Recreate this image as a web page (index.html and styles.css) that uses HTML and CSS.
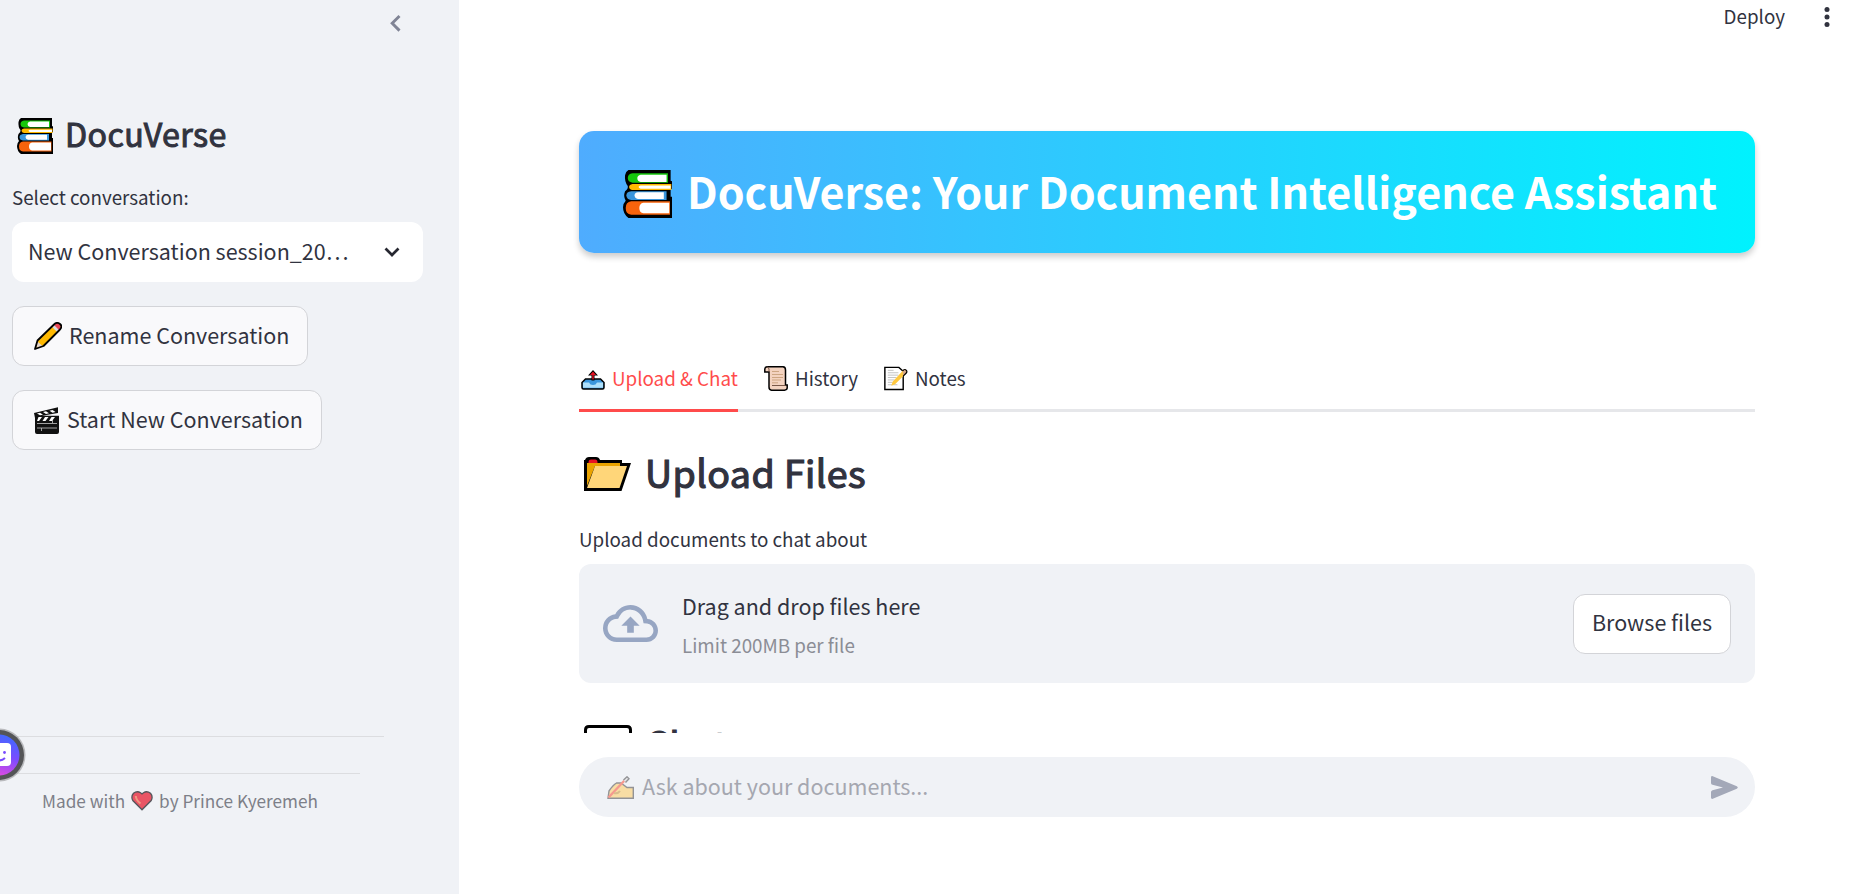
FILE: index.html
```html
<!DOCTYPE html>
<html lang="en">
<head>
<meta charset="utf-8">
<title>DocuVerse</title>
<link rel="stylesheet" href="styles.css">
</head>
<body>
<svg class="defs" width="0" height="0" aria-hidden="true">
  <symbol id="books" viewBox="0 0 36 36" preserveAspectRatio="none">
    <path d="M4 0H35V8L36 8.500V14L35 14.500V20H36V36H4Q0 33 0 28Q0 25 2 23Q0 20 1.500 16Q4 14 3.500 12Q1 9 1.500 4Q2 1 4 0Z" fill="#000"/>
    <path d="M12 2.500H33V9.500H7Q3.500 9 3.500 6Q3.500 3 7 2.500Z" fill="#16c60c"/>
    <path d="M13 3.500H32V9H13Q10.500 8.500 10.500 6Q10.500 4 13 3.500Z" fill="#fff"/>
    <path d="M7 10.500H35.500V15H7Q4.500 14.500 4.500 12.700Q4.500 11 7 10.500Z" fill="#ffb900"/>
    <path d="M13 11.700H35V14H13Q11.500 13.700 11.500 12.800Q11.500 12 13 11.700Z" fill="#fff"/>
    <path d="M6 16H32V22.500H6Q2.500 22 2.500 19Q2.500 16.500 6 16Z" fill="#3a96dd"/>
    <path d="M11 16.700H30V21.700H11Q8.500 21.300 8.500 19Q8.500 17 11 16.700Z" fill="#fff"/>
    <path d="M6 23.500H34.500V33.500H6Q2 33 2 28.500Q2 24 6 23.500Z" fill="#f7630c"/>
    <path d="M15 24.500H34V32.500H15Q12 32 12 28.500Q12 25 15 24.500Z" fill="#fff"/>
  </symbol>
</svg>
<div class="app">
  <aside class="sidebar">
    <div class="sidebar-head">
      <svg class="collapse" viewBox="0 0 11 19"><path d="M9.500 2L2.200 9.300L9.500 16.600" fill="none" stroke="#808495" stroke-width="2.900"/></svg>
    </div>
    <h2 class="brand"><svg class="brand-icon"><use href="#books"/></svg><span class="t-brand">DocuVerse</span></h2>
    <div class="select-label">Select conversation:</div>
    <div class="select"><span>New Conversation session_20…</span>
      <svg class="chev" viewBox="0 0 16 10"><path d="M1.500 1.500L8 8L14.500 1.500" fill="none" stroke="#262730" stroke-width="2.700"/></svg>
    </div>
    <button class="btn btn-rename">
      <svg class="i-pencil" viewBox="0 0 28 28"><path d="M1 27L3.500 18.500L20 2.500Q23-.5 26 2T25.500 8L9.500 24Z" fill="#ffb900"/><path d="M18.500 4L24 9.500L26 7.500Q28 4 25.500 2T20.500 2.300Z" fill="#e74856"/><path d="M18 4.800L20 3L25 8L23 10Z" fill="#ddd"/><path d="M3.500 19.500L8.500 24L2 26Z" fill="#e9d8c8"/><path d="M1 27L3.500 18.500L20 2.500Q23-.5 26 2T25.500 8L9.500 24Z" fill="none" stroke="#000" stroke-width="1.800" stroke-linejoin="round"/></svg>
      <span>Rename Conversation</span>
    </button>
    <button class="btn btn-start">
      <svg class="i-clap" viewBox="0 0 25 27"><path d="M0 6L24 .3V6L8 8.800H25V25Q25 27 23 27H3Q1 27 1 25V11Z" fill="#111"/><path d="M3 6.500L6 5.800L9 7.700L6 8.300ZM9 5L12 4.300L15 6.300L12 7ZM15.500 3.700L18.500 3L21.500 5L18.500 5.700ZM4.500 10H8L5 14H3ZM11 10H14.500L11.500 14H8.500ZM17.500 10H21L18 14H15Z" fill="#fff"/><path d="M3 16.500H23M3 21H23M7.500 21V24M18.500 13V16" stroke="#c8c8c8" stroke-width=".8"/></svg>
      <span>Start New Conversation</span>
    </button>
    <div class="rule rule-a"></div>
    <div class="rule rule-b"></div>
    <p class="credit"><span>Made with</span>
      <svg class="i-heart" viewBox="0 0 22 20"><path d="M11 18.800L1.800 9.500Q-.3 5.500 2.500 2.300Q6-.5 9.500 1.700L11 3L12.500 1.700Q16-.5 19.500 2.300Q22.300 5.500 20.200 9.500Z" fill="#e95565" stroke="#55565c" stroke-width="1.300"/><path d="M4.800 5Q5 9 9.500 12.500" fill="none" stroke="#f09a82" stroke-width="2"/></svg>
      <span>by Prince Kyeremeh</span></p>
    <svg class="bubble" viewBox="0 0 54 54">
      <defs><linearGradient id="bg" x1=".8" y1="0" x2=".45" y2="1"><stop offset="0" stop-color="#3b6cff"/><stop offset=".5" stop-color="#7a4bff"/><stop offset="1" stop-color="#e04be0"/></linearGradient></defs>
      <circle cx="27" cy="27" r="26.500" fill="#b9babd"/><circle cx="27" cy="27" r="25" fill="#545557"/><circle cx="27" cy="27" r="20.500" fill="url(#bg)"/>
      <rect x="14" y="15" width="25" height="23" rx="4" fill="#fff"/><circle cx="32.500" cy="24.500" r="1.400" fill="#7a4bff"/><path d="M22 29.500Q27.500 35 33 30" fill="none" stroke="#7a4bff" stroke-width="2"/>
    </svg>
  </aside>

  <main class="main">
    <header class="toolbar"><span>Deploy</span>
      <svg class="dots" viewBox="0 0 6 20" fill="#31333f"><circle cx="3" cy="2.600" r="2.500"/><circle cx="3" cy="10" r="2.500"/><circle cx="3" cy="17.400" r="2.500"/></svg>
    </header>
    <div class="scroll">
      <h1 class="banner"><svg class="banner-icon"><use href="#books"/></svg><span class="t-banner">DocuVerse: Your Document Intelligence Assistant</span></h1>
      <nav class="tabs">
        <div class="tab tab-active">
          <svg class="i-out" viewBox="0 0 24 20"><path d="M4.500 9H19.500L23 12.500V17.500Q23 19 21.500 19H2.500Q1 19 1 17.500V12.500Z" fill="#3a96dd" stroke="#000" stroke-width="1.500"/><path d="M2 12.500H8Q9 15 12 15T16 12.500H22V17.700H2Z" fill="#aee0fb"/><path d="M12 0L17 5.500H13.500V10.500H10.500V5.500H7Z" fill="#000"/><path d="M12 1.500L15 5H12.700V9.500H11.300V5H9Z" fill="#e81224"/></svg>
          <span>Upload &amp; Chat</span></div>
        <div class="tab tab-history">
          <svg class="i-scroll" viewBox="0 0 24 25"><path d="M3 .8H19Q21.500 1 21.500 4V19H23.200V22Q23 24 20.500 24.200H7.500Q5 24 5 21V6H.8V3Q1 1 3 .8Z" fill="#f4d3c0" stroke="#000" stroke-width="1.500"/><path d="M5 6V3Q4.500 1.300 3 .8M8 19.500H21.500" stroke="#6b4a3a" fill="none" stroke-width=".9"/><path d="M8 5.500H15M8 8.500H19M8 11.500H19M8 14H17M8 16.800H14" stroke="#c9a07c" stroke-width=".9"/></svg>
          <span>History</span></div>
        <div class="tab tab-notes">
          <svg class="i-memo" viewBox="0 0 25 25"><path d="M.9.9H15.500L20 5V24H.9Z" fill="#fff" stroke="#000" stroke-width="1.500"/><path d="M4 4H10M4 6.500H15M4 9H15M4 11.500H13M4 14H11M4 16.500H9M4 19H14" stroke="#bbb" stroke-width=".9"/><path d="M7.500 20L9 16L20.500 3.500Q22 2.500 23.300 4Q24.500 5.500 23 7L11.500 18.500Z" fill="#ffc83d"/><path d="M19.500 4.500L20.500 3.500Q22 2.500 23.300 4Q24.500 5.500 23 7L20 10" fill="#d9a98a" stroke="#000" stroke-width="1.200"/></svg>
          <span>Notes</span></div>
      </nav>
      <h2 class="section section-upload">
        <svg class="i-folder" viewBox="0 0 47 34"><path d="M1 3Q2 0 5 0H12Q15 0 16 3H38V6H47L37.500 34H0V3Z" fill="#000"/><path d="M4.500 5.500Q4.500 2.500 7 2.500H11Q13.500 2.500 13.500 5.500V6H4.500Z" fill="#e81224"/><path d="M3 6H36V9H11L3 29Z" fill="#eaa300"/><path d="M11 9H43L35.500 31H3Z" fill="#ffd679"/></svg>
        <span class="t-upload">Upload Files</span></h2>
      <div class="upload-label">Upload documents to chat about</div>
      <div class="dropzone">
        <svg class="i-cloud" viewBox="0 0 24 16" preserveAspectRatio="none"><path fill="#97a6c3" d="M19.350 6.040A7.490 7.490 0 0 0 12 0C9.110 0 6.600 1.640 5.350 4.040A5.994 5.994 0 0 0 0 10c0 3.310 2.690 6 6 6h13c2.760 0 5-2.240 5-5 0-2.640-2.050-4.780-4.650-4.960zM19 14H6c-2.210 0-4-1.790-4-4 0-2.050 1.530-3.760 3.560-3.970l1.070-.11.500-.95A5.469 5.469 0 0 1 12 2c2.620 0 4.880 1.860 5.390 4.430l.3 1.500 1.530.11A2.980 2.980 0 0 1 22 11c0 1.650-1.350 3-3 3zM8 9h2.550v3h2.900V9H16l-4-4z"/></svg>
        <div class="drop-text"><div class="drop-title">Drag and drop files here</div><div class="drop-limit">Limit 200MB per file</div></div>
        <button class="browse">Browse files</button>
      </div>
      <h2 class="section section-chat">
        <svg class="i-chat" viewBox="0 0 48 34"><path d="M5 1.500H43Q46.500 1.500 46.500 5V24Q46.500 27 43 27H20L12 33V27H5Q1.500 27 1.500 24V5Q1.500 1.500 5 1.500Z" fill="#fff" stroke="#000" stroke-width="3"/></svg>
        <span class="t-chat">Chat</span></h2>
    </div>
    <div class="ask">
      <svg class="i-hand" viewBox="0 0 27 23"><path d="M1 22.300L2 15Q6 9 9.500 7H14L20 11.500H26.300V22.300Z" fill="#f8dda4" stroke="#939396" stroke-width="1.400"/><path d="M1.500 21.500L17.500 4.500" stroke="#f5998f" stroke-width="2.400"/><path d="M16.500 4L20 .8L22 2.800L18.500 6.500" fill="#e6e6e8" stroke="#939396" stroke-width="1.400"/><path d="M7 17Q11 18 13 15" stroke="#d9bd8d" stroke-width="2" fill="none"/></svg>
      <span class="t-ask">Ask about your documents...</span>
      <svg class="i-send" viewBox="0 0 27 23"><path d="M1.800.2L25.800 10.200Q27.800 11.500 25.800 12.700L1.800 22.800Q0 23.200 0 21.500V16Q0 14.600 1.500 14.200L12 11.500L1.500 8.800Q0 8.400 0 7V1.500Q0-.3 1.800.2Z" fill="#a3a8b8"/></svg>
    </div>
  </main>
</div>
</body>
</html>
```
FILE: styles.css
```css
* { box-sizing: border-box; margin: 0; padding: 0; }
body { background: #fff; color: #31333f; font-family: "Noto Sans CJK SC", "Noto Sans", sans-serif; font-size: 21.5px; overflow: hidden; }
h1, h2, button { font: inherit; color: inherit; }
svg { display: block; flex: none; }
span { white-space: nowrap; }
.defs { position: absolute; }
.app { display: flex; width: 1864px; height: 894px; }

.sidebar { position: relative; flex: none; width: 459px; padding: 0 36px 0 12px; background: #f0f2f6; display: flex; flex-direction: column; align-items: flex-start; overflow: hidden; }
.sidebar-head { width: 100%; height: 110px; padding: 14px 22px 0 0; display: flex; justify-content: flex-end; }
.collapse { width: 11px; height: 19px; }
.brand { height: 50px; display: flex; align-items: center; line-height: 46px; padding-left: 5px; gap: 12px; font-size: 32.2px; -webkit-text-stroke: 1px #31333f; }
.brand-icon { width: 36px; height: 36px; margin-top: 1px; }
.t-brand { padding-bottom: 4px; letter-spacing: 0.4px; }
.select-label { height: 30px; margin-top: 22px; line-height: 30px; font-size: 18.8px; }
.select { width: 411px; height: 60px; margin-top: 10px; padding: 0 23px 2px 16px; background: #fff; border-radius: 12px; display: flex; align-items: center; justify-content: space-between; line-height: 36px; }
.chev { width: 16px; height: 10px; margin-top: 1px; }
.btn { height: 60px; margin-top: 24px; padding-left: 21px; background: #f9f9fb; border: 1px solid #d3d4d8; border-radius: 12px; display: flex; align-items: center; line-height: 36px; }
.btn span { padding-bottom: 2px; }
.btn-rename { width: 296px; gap: 7px; }
.btn-start { width: 310px; gap: 8px; }
.i-pencil { width: 28px; height: 28px; }
.i-clap { width: 25px; height: 27px; }
.rule { height: 1px; background: #dcdde0; }
.rule-a { width: 372px; margin-top: 286px; }
.rule-b { width: 348px; margin-top: 36px; }
.credit { display: flex; align-items: center; margin-top: 12px; padding-left: 30px; height: 30px; line-height: 30px; gap: 6px; font-size: 17.2px; color: #7d7f88; }
.i-heart { width: 22px; height: 20px; }
.bubble { position: absolute; left: -28px; top: 728px; width: 54px; height: 54px; }

.main { flex: 1; padding: 0 109px 0 120px; display: flex; flex-direction: column; }
.toolbar { height: 36px; margin-right: -75px; padding-bottom: 3px; display: flex; justify-content: flex-end; align-items: center; gap: 39px; line-height: 30px; font-size: 18.8px; }
.toolbar span { padding-bottom: 2px; }
.dots { width: 6px; height: 20px; margin-top: 1px; }
.scroll { height: 697px; overflow: hidden; margin: 0 -10px; padding: 95px 10px 0; flex: none; }
.banner { height: 122px; padding-left: 44px; border-radius: 15px; background: linear-gradient(90deg, #4facfe 0%, #00f2fe 100%); box-shadow: 0 4px 6px rgba(0, 0, 0, 0.2); color: #fff; font-size: 43px; font-weight: 700; display: flex; align-items: center; gap: 15px; line-height: 60px; }
.banner-icon { width: 49px; height: 48px; margin-top: 3px; }
.t-banner { padding-bottom: 5px; letter-spacing: -0.02px; }
.tabs { height: 64px; margin-top: 95px; border-bottom: 3px solid #e6e7ea; display: flex; gap: 26px; font-size: 18.8px; line-height: 61px; }
.tab { display: flex; align-items: center; gap: 7px; height: 64px; padding-bottom: 3px; }
.tab span { padding-bottom: 2px; }
.tab-active { color: #ff4b4b; border-bottom: 3px solid #ff4b4b; padding: 0 0 0 2px; width: 159px; }
.i-out { width: 24px; height: 20px; margin-top: 3px; }
.i-scroll { width: 24px; height: 25px; }
.i-memo { width: 24px; height: 25px; }
.section { display: flex; align-items: center; height: 60px; padding-left: 5px; font-size: 37.6px; line-height: 56px; gap: 14px; -webkit-text-stroke: 1.200px #31333f; }
.t-upload { padding-bottom: 4px; letter-spacing: 0.4px; }
.section-upload { margin-top: 32px; }
.i-folder { width: 47px; height: 34px; }
.upload-label { height: 30px; margin-top: 20px; font-size: 18.8px; line-height: 30px; }
.dropzone { height: 119px; margin-top: 10px; padding: 0 24px; background: #f0f2f6; border-radius: 12px; display: flex; align-items: center; }
.i-cloud { width: 55px; height: 37px; }
.drop-text { flex: 1; margin-left: 24px; }
.drop-title { line-height: 36px; }
.drop-limit { margin-top: 6px; font-size: 18.8px; line-height: 30px; color: #8b8d95; }
.browse { width: 158px; height: 60px; padding-bottom: 3px; background: #fff; border: 1px solid #d3d4d8; border-radius: 12px; line-height: 36px; }
.section-chat { margin-top: 30px; align-items: flex-start; line-height: 60px; }
.i-chat { width: 48px; height: 34px; margin-top: 12px; }
.t-chat { margin-left: -1px; letter-spacing: 0.4px; }
.ask { flex: none; height: 60px; margin-top: 24px; padding: 0 17px 0 28px; background: #f0f2f6; border-radius: 30px; display: flex; align-items: center; color: #a5a7b0; line-height: 36px; }
.t-ask { flex: 1; margin-left: 8px; padding-bottom: 2px; }
.i-hand { width: 27px; height: 23px; }
.i-send { width: 27px; height: 23px; }
```
